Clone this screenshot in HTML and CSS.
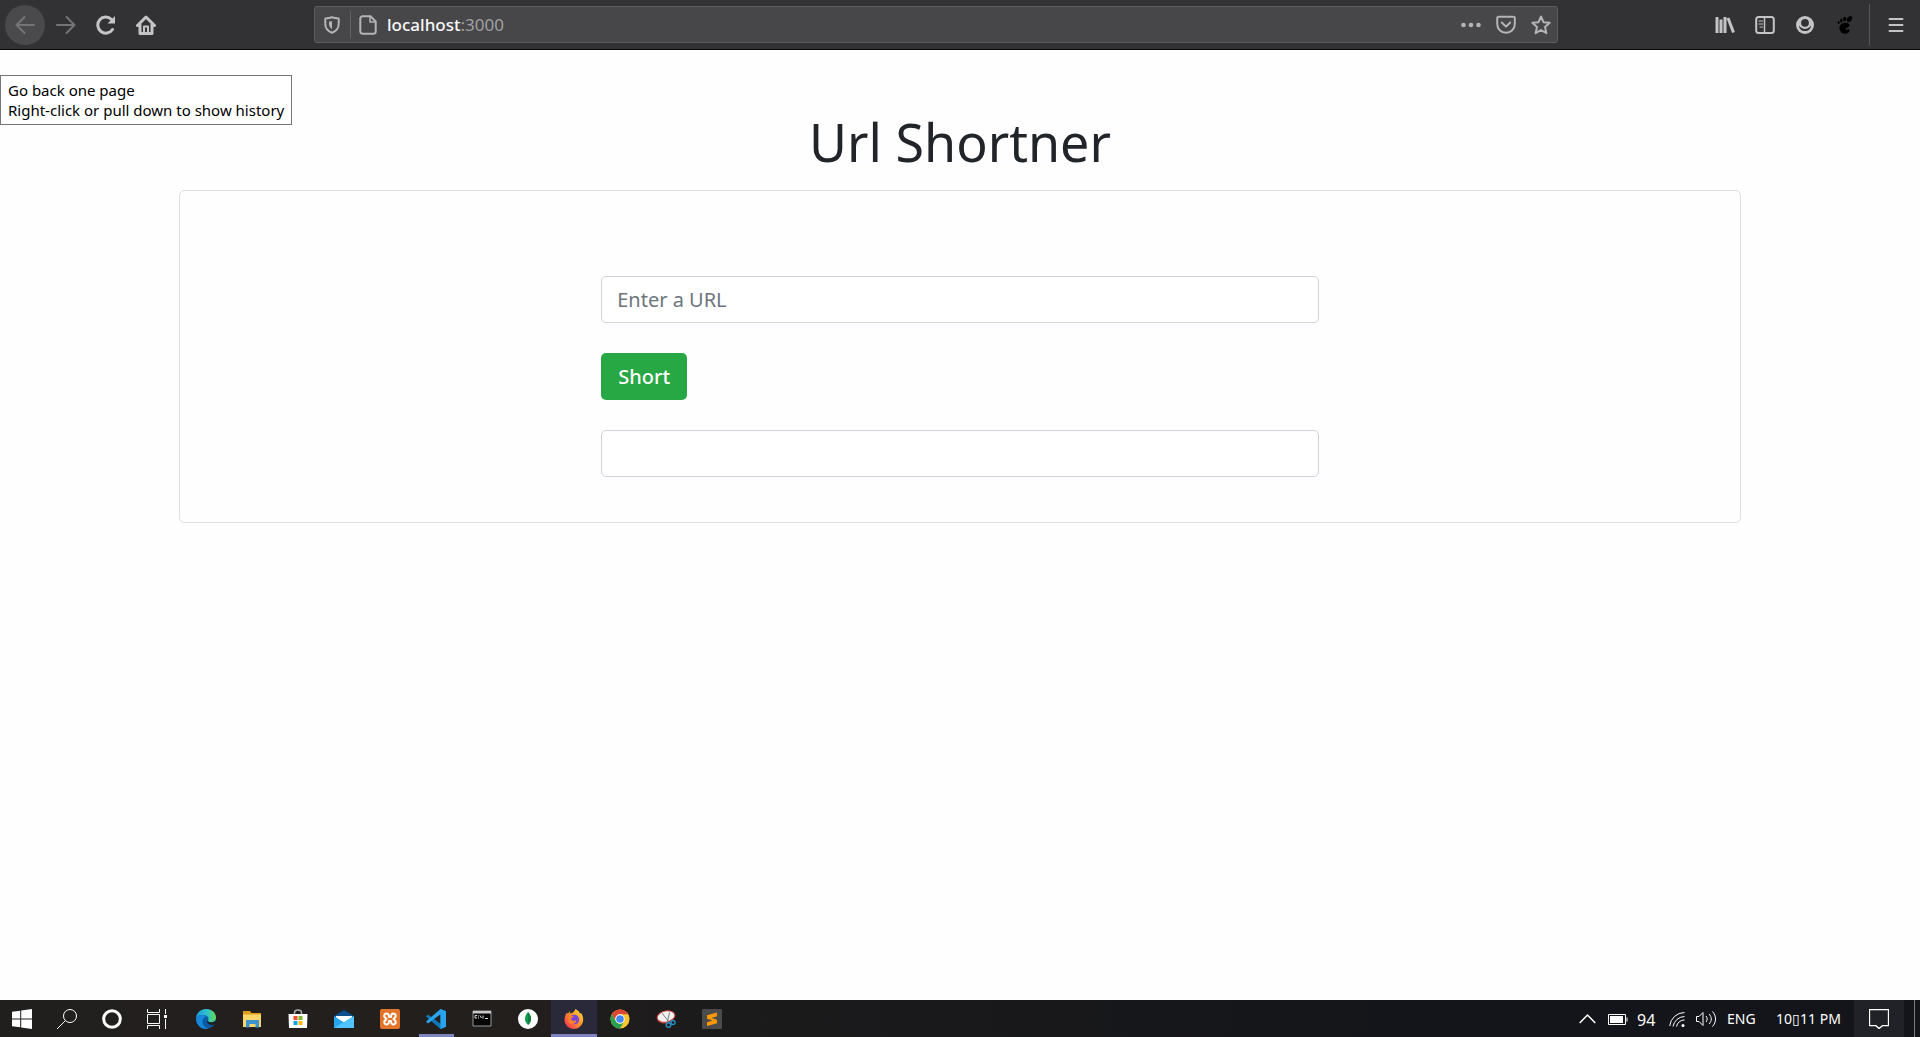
FILE: index.html
```html
<!DOCTYPE html>
<html lang="en">
<head>
<meta charset="utf-8">
<title>Url Shortner</title>
<link rel="stylesheet" href="styles.css">
</head>
<body>
<header class="toolbar">
  <nav class="tools" aria-label="Navigation">
    <button class="tool tool-back" aria-label="Back"><svg width="20" height="20" viewBox="0 0 20 20" class="line dim"><path d="M19 10H2M9.500 2L1.500 10l8 8"/></svg></button>
    <button class="tool" aria-label="Forward"><svg width="20" height="20" viewBox="0 0 20 20" class="line dim"><path d="M1 10h17M10.500 2l8 8-8 8"/></svg></button>
    <button class="tool" aria-label="Reload"><svg width="20" height="20" viewBox="0 0 20 20" class="line bold"><path d="M16.500 14.500A8 8 0 1 1 15.500 4.500L17 6"/><path d="M19 1v7.500h-7.500z" fill="#c4c4c6" stroke="none"/></svg></button>
    <button class="tool" aria-label="Home"><svg width="20" height="20" viewBox="0 0 20 20" class="line bold"><path d="M1.500 10.500L10 2l8.500 8.500M4 9.500V18.500h12V9.500"/><path d="M8 18v-6.500h4V18" stroke-width="2"/></svg></button>
  </nav>
  <div class="address">
    <svg width="16" height="18" viewBox="0 0 16 18" class="line urlicon"><path d="M8 1.300C5.500 2.200 3.500 2.400 1.300 2.500v5.500c0 4 3 7.300 6.700 8.700 3.700-1.400 6.700-4.700 6.700-8.700V2.500C12.500 2.400 10.500 2.200 8 1.300z"/><path d="M8 5c-1 .4-2 .5-3 .6V8c0 2 1.200 4 3 5z" fill="#b4b4b6" stroke="none"/></svg>
    <span class="address-rule"></span>
    <svg width="18" height="20" viewBox="0 0 18 20" class="line urlicon"><path d="M3.500 1.300h8L16.700 6.500v10a2.200 2.200 0 0 1-2.200 2.200h-11a2.200 2.200 0 0 1-2.200-2.200v-13a2.200 2.200 0 0 1 2.200-2.200z"/><path d="M11 1.500V7h5.500" stroke-width="1.500"/></svg>
    <div class="address-text" role="textbox" aria-label="Address"><b>localhost</b>:3000</div>
    <div class="address-actions">
      <button class="mini" aria-label="Page actions"><svg width="20" height="20" viewBox="0 0 20 20" fill="#b4b4b6"><circle cx="2.500" cy="10" r="2.300"/><circle cx="10" cy="10" r="2.300"/><circle cx="17.500" cy="10" r="2.300"/></svg></button>
      <button class="mini" aria-label="Save to Pocket"><svg width="20" height="20" viewBox="0 0 20 20" class="line urlicon"><path d="M2.500 1.800h15a1.300 1.300 0 0 1 1.300 1.300V9a8.800 8.800 0 0 1-17.600 0V3.100a1.300 1.300 0 0 1 1.300-1.300z"/><path d="M5.800 7.500L10 11.600l4.200-4.100"/></svg></button>
      <button class="mini" aria-label="Bookmark this page"><svg width="20" height="20" viewBox="0 0 20 20" class="line urlicon"><path d="M10 1.500l2.500 5.700 6.200.6-4.700 4.100 1.400 6.300L10 15l-5.400 3.200L6 11.900 1.300 7.800l6.200-.6z"/></svg></button>
    </div>
  </div>
  <div class="tools">
    <button class="tool" aria-label="Library"><svg width="20" height="20" viewBox="0 0 20 20" class="line library"><path d="M2 2v16M6 4.500V18M10 2v16M13 3l5.500 14.500"/></svg></button>
    <button class="tool" aria-label="Sidebars"><svg width="20" height="20" viewBox="0 0 20 20" class="line"><rect x="1.200" y="2" width="17.600" height="16" rx="2.500"/><path d="M9.500 2v16" stroke-width="1.500"/><path d="M4 6h3.500M4 9h3.500M5 12h2.500" stroke-width="1.200"/></svg></button>
    <button class="tool" aria-label="Account"><svg width="20" height="20" viewBox="0 0 20 20"><circle cx="10" cy="10" r="9" fill="#c4c4c6"/><circle cx="10" cy="7.800" r="3.900" fill="#323234"/><path d="M4 10.500c1 1.800 2 2.300 3.200 2.700a6 6 0 0 0 5.600 0c1.200-.4 2.200-.9 3.200-2.700-.1 3.500-2.600 5.500-6 5.500s-5.900-2-6-5.500z" fill="#323234"/></svg></button>
    <button class="tool" aria-label="GNOME Shell integration"><svg width="20" height="20" viewBox="0 0 20 20" fill="#000"><ellipse cx="14.500" cy="4" rx="2.200" ry="3.300" transform="rotate(35 14.500 4)"/><ellipse cx="9.700" cy="4" rx="1.500" ry="2.200" transform="rotate(15 9.700 4)"/><ellipse cx="6.300" cy="5.500" rx="1.200" ry="1.900"/><ellipse cx="3.600" cy="7.500" rx="1" ry="1.600" transform="rotate(-15 3.600 7.500)"/><path d="M14.500 10.500c0-2-2-3-4.500-2.700-3.500.4-6 2.700-5.500 6 .4 3 2.500 5 5.500 5 2.500 0 4.500-1.500 4.500-3.200 0-1.200-1-1.600-2-1.100-1.200.6-2.200.3-2.200-.6 0-1.200 4.200-1.200 4.200-3.400z"/></svg></button>
    <span class="tools-rule"></span>
    <button class="tool" aria-label="Open menu"><svg width="20" height="20" viewBox="0 0 20 20" class="line"><path d="M3.500 4h13M3.500 10h13M3.500 16h13"/></svg></button>
  </div>
  <div class="tooltip" role="tooltip">Go back one page<br>Right-click or pull down to show history</div>
</header>

<main class="page">
  <h1 class="title">Url Shortner</h1>
  <section class="card">
    <form class="form">
      <input class="field" type="text" placeholder="Enter a URL" aria-label="Enter a URL">
      <button class="submit" type="button">Short</button>
      <input class="field" type="text" aria-label="Short URL">
    </form>
  </section>
</main>

<footer class="taskbar">
  <div class="apps">
    <button class="app" aria-label="Start"><svg width="20" height="20" viewBox="0 0 20 20" fill="#fff"><path d="M0 2.800L8.200 1.700v7.800H0zM9.200 1.500L20 0v9.500H9.200zM0 10.500h8.200v7.800L0 17.200zM9.200 10.500H20V20L9.200 18.500z"/></svg></button>
    <button class="app" aria-label="Search"><svg width="20" height="20" viewBox="0 0 20 20" class="thin"><circle cx="13" cy="7" r="6.500"/><path d="M8.500 11.500L0 20"/></svg></button>
    <button class="app" aria-label="Cortana"><svg width="20" height="20" viewBox="0 0 20 20" class="thin"><circle cx="10" cy="10" r="8.300" stroke-width="3"/></svg></button>
    <button class="app" aria-label="Task View"><svg width="20" height="20" viewBox="0 0 20 20" class="thin"><path d="M.5 0v3.500h12V0M.5 20v-3.500h12V20M.5 5.500h12v9H.5zM18.500 0v5M18.500 10v10"/><path d="M17 6h3v3h-3z" fill="#fff" stroke="none"/></svg></button>
    <button class="app wide" aria-label="Edge"><svg width="20" height="20" viewBox="0 0 20 20"><defs><linearGradient id="edge" x1="0" x2="1"><stop offset="0" stop-color="#1b9de2"/><stop offset=".6" stop-color="#32c4c4"/><stop offset="1" stop-color="#66d94c"/></linearGradient></defs><circle cx="10" cy="10" r="10" fill="#0c59a4"/><path d="M0 9C.7 3.500 5 0 10 0c6 0 10 4 10 8.500 0 3-2.300 4.700-5 4.700-2 0-3.200-.8-3.200-1.500 0-.5.7-.9.700-2.200C12.500 7.500 10 6 7 6 3.500 6 1 7.300 0 9z" fill="url(#edge)"/><path d="M0 9c1-2 4-3.200 7-3 1.500.1 3 .6 4 1.500-3 0-4.500 2-4.500 5 0 3.500 2.500 6.500 6 7C6 21.500 0 16.500 0 9z" fill="#1687d9"/><path d="M12 11.500c0 1 1.200 1.900 3.200 1.900 1.500 0 2.800-.5 3.800-1.300l1 1.500-1 1.500c-3.500 2-8 .5-8-3z" fill="#201f1f"/></svg></button>
    <button class="app wide" aria-label="File Explorer"><svg width="20" height="20" viewBox="0 0 20 20"><path d="M1 2h7l1.500 2H19v4H1z" fill="#dd9d16"/><path d="M1 5.500h18V18H1z" fill="#fbd66a"/><path d="M4 11h13v7.500h-3.500V15h-6v3.500H4z" fill="#3d92d0"/></svg></button>
    <button class="app wide" aria-label="Microsoft Store"><svg width="20" height="20" viewBox="0 0 20 20"><path d="M6.500 6V3.500C6.500.2 13.500.2 13.500 3.500V6" fill="none" stroke="#aaa" stroke-width="1.500"/><path d="M.5 5h19l-.5 14H1z" fill="#fff"/><path d="M5.500 7H9.500v4h-4z" fill="#ee5029"/><path d="M10.500 7h4v4h-4z" fill="#7cb928"/><path d="M5.500 12h4v4h-4z" fill="#16a2e8"/><path d="M10.500 12h4v4h-4z" fill="#fdb813"/></svg></button>
    <button class="app wide" aria-label="Mail"><svg width="20" height="20" viewBox="0 0 20 20"><path d="M0 7l10-6 10 6v3H0z" fill="#0b4f91"/><path d="M2 7h16v6H2z" fill="#fff"/><path d="M0 7l10 6.500L20 7v12H0z" fill="#25a5ef"/><path d="M0 19l20-12v12z" fill="#50c4fa"/></svg></button>
    <button class="app wide" aria-label="XAMPP"><svg width="20" height="20" viewBox="0 0 20 20"><rect width="20" height="20" rx="2" fill="#e3752b"/><path d="M6.500 4.500a2.300 2.300 0 0 0-1.500 4l1.500 1.500L5 11.500a2.300 2.300 0 1 0 3.800 2.300L9 12h2l.2 1.800A2.300 2.300 0 1 0 15 11.500L13.500 10 15 8.500a2.300 2.300 0 1 0-3.800-2.300L11 8H9l-.2-1.800a2.300 2.300 0 0 0-2.300-1.700z" fill="none" stroke="#fff" stroke-width="2" stroke-linejoin="round"/></svg></button>
    <button class="app wide running" aria-label="Visual Studio Code"><svg width="20" height="20" viewBox="0 0 20 20"><path d="M14.500 0L20 2.300v15.400L14.500 20 0 7.500 2 5.500l12.500 9.300z" fill="#0f78bd"/><path d="M14.500 0L20 2.300v15.400L14.500 20V5.200L2 14.500l-2-2z" fill="#29a3ec"/></svg></button>
    <button class="app wide" aria-label="Command Prompt"><svg width="20" height="20" viewBox="0 0 20 20"><path d="M1 2h18v15H1z" fill="#050505" stroke="#999"/><path d="M1 2h18v2.500H1z" fill="#c8c8c8"/><path d="M5 6.500H3V9h2M6.500 6.500v1M6.500 8.500v1M8 6.500L9.500 9M11 6.500v3M13 9.500h3" stroke="#ddd" fill="none"/></svg></button>
    <button class="app wide" aria-label="MongoDB Compass"><svg width="20" height="20" viewBox="0 0 20 20"><circle cx="10" cy="10" r="10" fill="#fff"/><path d="M10 3c4 4.500 4 9 0 13-4-4-4-8.500 0-13z" fill="#139c4b"/><path d="M10 3c4 4.500 4 9 0 13z" fill="#0d7f40"/></svg></button>
    <button class="app wide current" aria-label="Firefox"><svg width="20" height="20" viewBox="0 0 20 20"><defs><linearGradient id="fox" x1="1" x2="0" y2="1"><stop offset="0" stop-color="#ffe23e"/><stop offset=".45" stop-color="#ff9427"/><stop offset="1" stop-color="#f5215b"/></linearGradient></defs><path d="M11.500 0c3 1.500 4 3 4.300 4.500L17 4c2 3 2.500 5.500 2 8-.8 4.500-4.500 8-9 8-5 0-9.500-4-9.500-9 0-3 1-5.500 2.500-7.500L4 5l1.500-3 .8 2.500C9 4 10.500 2.500 11.500 0z" fill="url(#fox)"/><circle cx="10.300" cy="10.500" r="4.800" fill="#7544d8"/><path d="M4 8c2-2 4-1.500 6 0-1.500.2-2 1-3 1.500.5 2.500 3.500 3 5.500 1.500-.5 3-2.500 4.500-5 4-3-.5-4.500-3.500-3.500-7z" fill="#ff7d2e"/></svg></button>
    <button class="app wide" aria-label="Chrome"><svg width="20" height="20" viewBox="0 0 20 20"><circle cx="10" cy="10" r="9.500" fill="#fbc62f"/><path d="M1.800 5.300a9.500 9.500 0 0 1 16.400 0H10a4.700 4.700 0 0 0-4.100 7.100z" fill="#dc4637"/><path d="M1.800 5.300l4.100 7.100a4.700 4.700 0 0 0 8.200 0L10 19.500A9.500 9.500 0 0 1 1.800 5.300z" fill="#26a053"/><circle cx="10" cy="10" r="4.700" fill="#fff"/><circle cx="10" cy="10" r="3.800" fill="#4387f5"/></svg></button>
    <button class="app wide" aria-label="Snipping Tool"><svg width="20" height="20" viewBox="0 0 20 20"><ellipse cx="9.500" cy="9" rx="8.500" ry="5.500" transform="rotate(-12 9.500 9)" fill="#9a2b28"/><ellipse cx="10" cy="7.500" rx="9" ry="5.500" transform="rotate(-12 10 7.500)" fill="#f2f2f2" stroke="#cf3a35"/><path d="M6 4l7 9M13.500 3.500l-2 9" stroke="#777"/><circle cx="12.500" cy="16" r="2.300" fill="none" stroke="#268dc5" stroke-width="1.500"/><circle cx="17" cy="13.500" r="2" fill="none" stroke="#268dc5" stroke-width="1.500"/></svg></button>
    <button class="app wide" aria-label="Sublime Text"><svg width="20" height="20" viewBox="0 0 20 20"><rect width="20" height="20" rx="1" fill="#4b4b4b"/><path d="M15 3.500v3.800L9.500 9l5.500 1.700v3.500L5 17v-3.700l5.500-1.800L5 9.800V6.300z" fill="#ff9800"/></svg></button>
  </div>
  <div class="tray">
    <button class="status" aria-label="Show hidden icons"><svg width="17" height="20" viewBox="0 0 17 20" class="thin"><path d="M.7 14l7.800-8 7.800 8" stroke-width="1.500"/></svg></button>
    <svg width="20" height="20" viewBox="0 0 20 20" class="thin"><path d="M.5 5.500h17v10H.5zM19 8.500v4"/><path d="M2 7h13v7H2z" fill="#fff" stroke="none"/></svg>
    <span class="percent">94</span>
    <svg width="16" height="20" viewBox="0 0 16 20" class="thin"><path d="M.7 17A15 15 0 0 1 15.500 3.500M4 17.500A12 12 0 0 1 15.500 7.500M7.500 17.500a8 8 0 0 1 8-6.500"/><circle cx="14" cy="16.500" r="1.500" fill="#fff" stroke="none"/></svg>
    <svg width="21" height="20" viewBox="0 0 21 20" class="thin"><path d="M.5 7.500h2.500l4-4v13l-4-4H.5zM10 7c1.500 1.800 1.500 4.200 0 6M13 5c3 3 3 7 0 10M16.500 2.500c4 4.500 4 10.500 0 15"/></svg>
    <span class="language">ENG</span>
    <time class="clock">10▯11 PM</time>
    <button class="notices" aria-label="Notifications"><svg width="20" height="20" viewBox="0 0 20 20" class="thin"><path d="M.5.7h19v16h-6L10 19.500l-3-2.800H.5z" stroke-width="1.300"/></svg></button>
    <span class="desktop-edge"></span>
  </div>
</footer>
</body>
</html>
```
FILE: styles.css
```css
* { box-sizing: border-box; }

body {
  margin: 0;
  min-height: 100vh;
  display: flex;
  flex-direction: column;
  background: #fefefe;
  color: #212529;
  font-family: "Noto Sans", sans-serif;
}

button {
  margin: 0;
  padding: 0;
  border: 0;
  background: none;
  color: inherit;
  font: inherit;
}

svg { display: block; flex: none; }

.line {
  fill: none;
  stroke: #c4c4c6;
  stroke-width: 2;
  stroke-linecap: round;
  stroke-linejoin: round;
}
.bold { stroke-width: 3; }
.library { stroke-width: 3; stroke-linecap: butt; }
.dim { stroke: #747476; }
.urlicon { stroke: #b4b4b6; }
.thin { fill: none; stroke: #fff; stroke-width: 1; }

/* Browser toolbar */
.toolbar {
  position: relative;
  display: grid;
  grid-template-columns: auto minmax(0, 1fr) auto;
  column-gap: 147px;
  align-items: center;
  height: 50px;
  padding: 0 4px 0 5px;
  background: #323234;
  border-bottom: 1px solid #0c0c0d;
}
.tools { display: flex; align-items: center; }
.tools:first-child { padding-right: 1px; }
.tool {
  display: grid;
  place-items: center;
  width: 40px;
  height: 40px;
  border-radius: 50%;
}
.tool-back { margin-right: 1px; background: #4a4a4c; }
.tools-rule {
  width: 1px;
  height: 42px;
  margin: 0 6px 0 4px;
  background: #555557;
}
.address {
  display: flex;
  align-items: center;
  height: 37px;
  padding: 0 6px 0 9px;
  background: #474749;
  border: 1px solid #5c5c5e;
  border-radius: 3px;
}
.address-rule {
  width: 1px;
  height: 27px;
  margin: 0 8px 0 10px;
  background: #636365;
}
.address-text {
  flex: 1;
  padding-left: 10px;
  color: #a0a0a2;
  font-size: 17px;
}
.address-text b { color: #f9f9fa; font-weight: 500; }
.address-actions { display: flex; gap: 15px; }

.tooltip {
  position: absolute;
  top: 75px;
  left: 0;
  padding: 4px 7px;
  border: 1px solid #767676;
  background: #fff;
  color: #000;
  font-size: 15px;
  line-height: 20px;
  white-space: nowrap;
}

/* Page */
.page {
  flex: 1;
  width: calc(100% * 5 / 6);
  margin: 0 auto;
  padding: 62px 19px;
}
.title {
  margin: 0 0 18px;
  font-size: 52px;
  font-weight: 400;
  line-height: 60px;
  text-align: center;
}
.card {
  padding: 85px 0 45px;
  border: 1px solid #dfdfdf;
  border-radius: 5px;
}
.form {
  display: flex;
  flex-direction: column;
  align-items: flex-start;
  gap: 30px;
  width: 46%;
  margin: 0 auto;
}
.field {
  width: 100%;
  height: 47px;
  padding: 0 15px;
  border: 1px solid #ced4da;
  border-radius: 5px;
  background: #fff;
  color: #495057;
  font: inherit;
  font-size: 20px;
}
.field::placeholder { color: #6c757d; opacity: 1; }
.submit {
  height: 47px;
  padding: 0 17px;
  border-radius: 5px;
  background: #28a745;
  color: #fff;
  font-size: 20px;
  font-weight: 500;
}

/* Taskbar */
.taskbar {
  display: flex;
  justify-content: space-between;
  height: 37px;
  background: linear-gradient(90deg, #211f1e, #231f1d 25%, #1a1a1b 40%, #14151a 75%);
  color: #fff;
}
.apps, .tray { display: flex; }
.app {
  display: grid;
  place-items: center;
  width: 45px;
  height: 37px;
  padding: 1px 1px 0 0;
}
.app.wide { width: 46px; padding-right: 0; }
.app:nth-child(5) { margin-left: 3px; }
.running {
  background: linear-gradient(#7e84bd, #7e84bd) center bottom / 35px 3px no-repeat;
}
.current {
  background: #29293a;
  box-shadow: inset 0 -3px #7e84bd;
}
.tray {
  align-items: center;
  font-size: 16px;
}
.percent { width: 18px; margin: 2px 14px 0 9px; }
.status { margin-right: 12px; }
.tray svg + svg { margin-left: 11px; }
.language { width: 32px; margin: 0 17px 0 10px; }
.clock { width: 67px; margin-right: 11px; white-space: nowrap; }
.language, .clock { font-size: 14px; }
.notices {
  display: grid;
  place-items: center;
  width: 50px;
  height: 37px;
  background: #212227;
}
.desktop-edge {
  width: 6px;
  height: 37px;
  margin-left: 10px;
  border-left: 1px solid #77787b;
}
```
